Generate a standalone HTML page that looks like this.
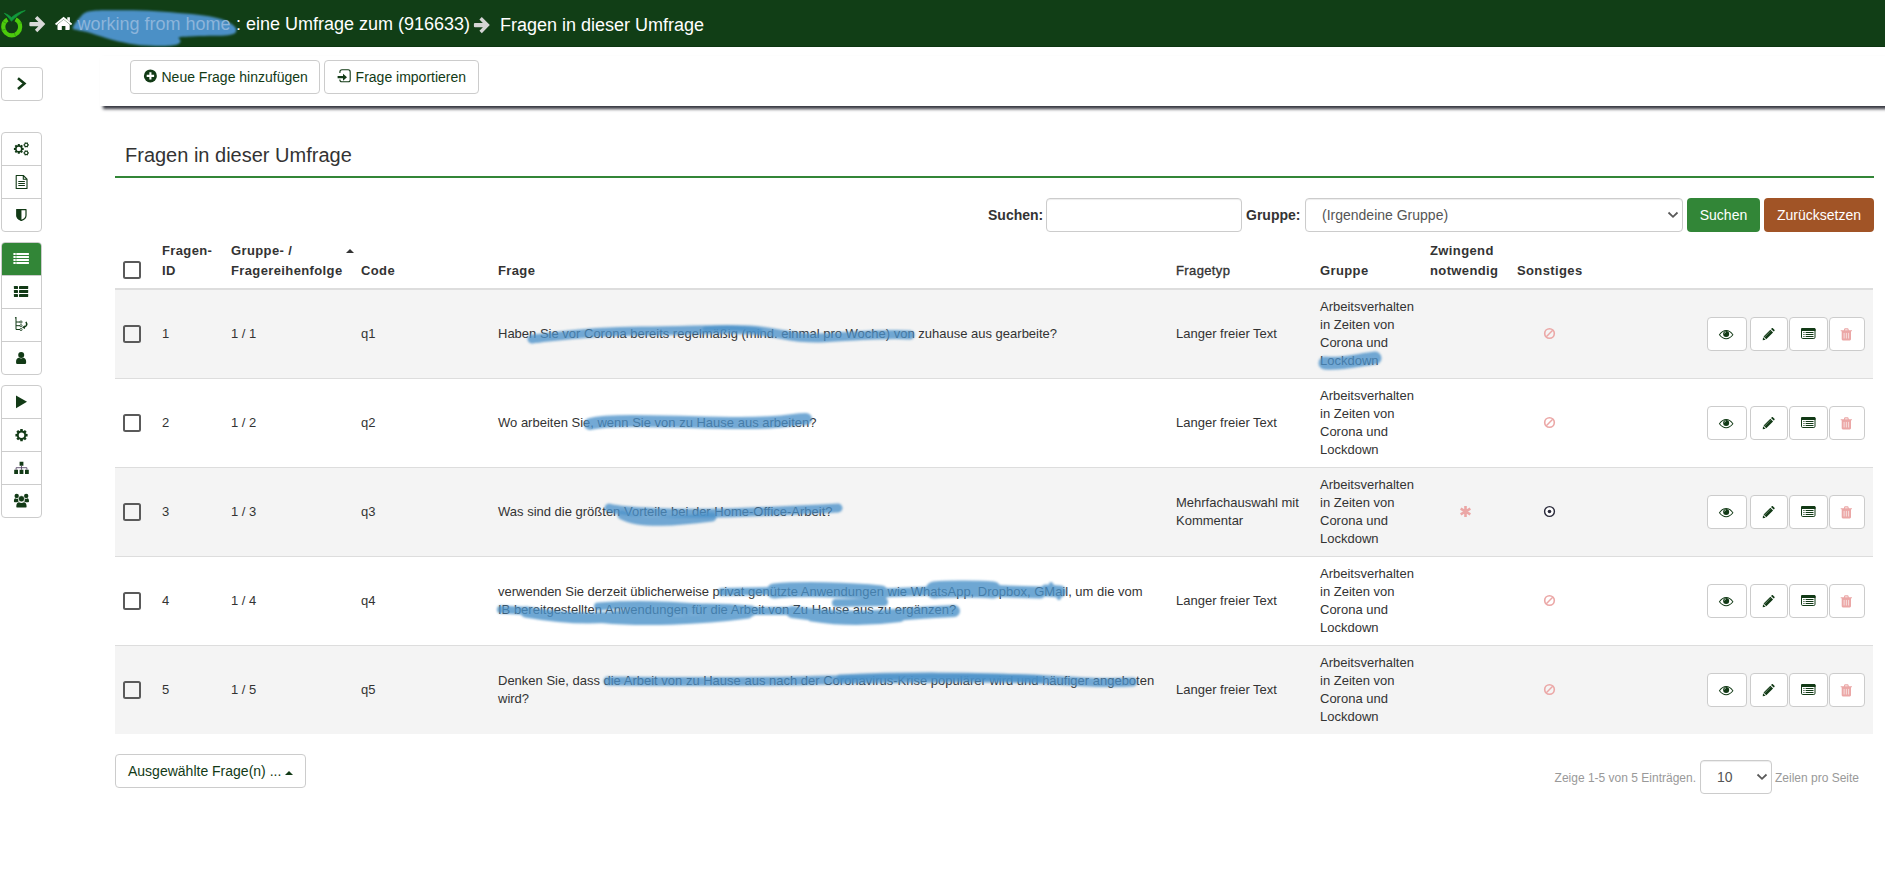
<!DOCTYPE html>
<html lang="de">
<head>
<meta charset="utf-8">
<title>Fragen in dieser Umfrage</title>
<style>
*{box-sizing:border-box;}
html,body{margin:0;padding:0;}
body{width:1885px;height:880px;overflow:hidden;background:#fff;font-family:"Liberation Sans",sans-serif;font-size:14px;color:#333;position:relative;}
svg{display:block;}
.abs{position:absolute;}
#topbar{position:absolute;left:0;top:0;width:1885px;height:47px;background:#113e16;border-bottom:1px solid #0c3511;color:#fff;font-size:18px;}
#topbar .t{position:absolute;top:14px;line-height:21px;white-space:nowrap;}
#menubar{position:absolute;left:100px;top:55.5px;width:1800px;height:50px;background:#fff;box-shadow:3px 3px 3px #35363f;}
.btn{position:absolute;height:34px;border:1px solid #ccc;border-radius:4px;background:#fff;color:#123a16;font-size:14px;line-height:20px;padding:6px 12px;white-space:nowrap;}
.sgroup{position:absolute;left:1px;width:41px;border:1px solid #ccc;border-radius:4px;background:#fff;overflow:hidden;}
.sgroup .sb{height:33px;border-top:1px solid #ccc;}
.sgroup .sb:first-child{border-top:none;height:32px;}
.sgroup .sb.act{background:#328637;}
h3.title{position:absolute;left:115px;top:132px;width:1759px;height:46px;margin:0;font-size:20px;font-weight:normal;line-height:28px;padding:9px 10px 7px 10px;border-bottom:2px solid #328637;color:#333;}
.lbl{position:absolute;font-weight:bold;font-size:14px;line-height:20px;top:205px;color:#333;}
.inp{position:absolute;top:198px;height:34px;border:1px solid #ccc;border-radius:4px;background:#fff;box-shadow:inset 0 1px 1px rgba(0,0,0,.075);}
.sbtn{position:absolute;top:198px;height:34px;border-radius:4px;color:#fff;font-size:14px;line-height:20px;padding:7px 0;text-align:center;}
table#q{position:absolute;left:115px;top:240px;width:1758px;border-collapse:separate;border-spacing:0;table-layout:fixed;font-size:13px;line-height:18px;color:#333;}
#q th{text-align:left;vertical-align:bottom;padding:0 8px 7px 8px;height:50px;line-height:20px;font-weight:bold;border-bottom:2px solid #ddd;letter-spacing:0.38px;}
#q td{padding:8px;height:89px;vertical-align:middle;border-top:1px solid #ddd;}
#q tbody tr:first-child td{border-top:none;height:88px;}
#q tbody tr:nth-child(odd){background:#f4f4f4;}
.cb{display:block;width:18px;height:18px;border:2px solid #5a5a5a;border-radius:2.5px;background:transparent;}
.c{text-align:center;}
.acts{position:relative;height:34px;}
.ab{position:absolute;top:0;height:34px;border:1px solid #ccc;border-radius:4px;background:#fff;}
.foot{position:absolute;font-size:12px;color:#999;line-height:17px;top:770px;white-space:nowrap;}
.caret{position:absolute;width:0;height:0;border-left:4px solid transparent;border-right:4px solid transparent;border-bottom:4px solid #123a16;}
.chev{position:absolute;}
</style>
</head>
<body>

<div id="topbar">
  <svg class="abs" style="left:0;top:0;pointer-events:none" width="260" height="47" viewBox="0 0 260 47"><defs><filter id="bl2" x="-5%" y="-10%" width="110%" height="120%"><feGaussianBlur stdDeviation="0.9"/></filter></defs><path fill="#4b90c6" filter="url(#bl2)" d="M72.8 28.0 C73.0 26.1 76.1 21.3 79.0 18.5 C81.9 15.7 82.3 12.6 90.0 11.2 C97.7 9.8 114.0 10.3 125.0 10.3 C136.0 10.3 146.0 10.7 156.0 11.2 C166.0 11.7 176.2 12.7 185.0 13.5 C193.8 14.3 202.3 15.0 209.0 16.2 C215.7 17.4 220.9 18.9 225.0 20.5 C229.1 22.1 231.6 23.9 233.5 25.5 C235.4 27.1 236.2 28.6 236.3 30.0 C236.4 31.4 235.9 32.9 234.0 33.8 C232.1 34.7 229.2 35.2 225.0 35.5 C220.8 35.8 214.8 35.6 209.0 35.8 C203.2 36.0 195.0 36.3 190.0 36.6 C185.0 36.9 180.6 36.7 179.0 37.5 C177.4 38.3 181.2 40.2 180.5 41.5 C179.8 42.8 179.1 44.2 175.0 45.0 C170.9 45.8 162.7 46.1 156.0 46.0 C149.3 45.9 142.1 45.5 135.0 44.5 C128.0 43.5 119.9 41.7 113.7 40.2 C107.5 38.7 102.5 36.9 98.0 35.5 C93.5 34.1 90.3 32.9 87.0 32.0 C83.7 31.1 80.4 30.9 78.0 30.2 C75.6 29.5 72.6 29.9 72.8 28.0Z"/></svg>
  <span class="t" style="left:77.5px;color:#8db5db">working from home</span>
  <span class="t" style="left:236px">: eine Umfrage zum (916633)</span>
  <span class="t" style="left:500px;top:15px">Fragen in dieser Umfrage</span>
  <svg class="abs" style="left:0;top:0" width="520" height="47" viewBox="0 0 520 47"><circle cx="11.7" cy="26.9" r="8.45" fill="none" stroke="#4ccb0c" stroke-width="4.2" stroke-dasharray="44.6 8.5" stroke-dashoffset="-43.6"/><path stroke="#2b9210" stroke-width=".7" fill="none" d="M19.8 23.3 L22 22.3 M1.6 30.4 L5.9 29.1 M14.4 33 L15.6 36.6 M2.9 21.5 L6.5 23.3"/><path stroke="#119a3c" stroke-width=".7" stroke-linejoin="round" fill="#119a3c" d="M4.3 13.3 C7 14.2 9.6 15.6 11.4 17.6 C15 14.3 20 11.6 25.3 10.5 C20.2 13.3 15.2 17.4 11.4 21.2 C9.4 18.3 7 15.5 4.3 13.3Z"/><path fill="#d9d9d9" d="M30.40 22.00 h8 l-3.5 -3.6 l2.4 -2.4 l8 8.1 l-8 8.1 l-2.4 -2.4 l3.5 -3.6 h-8 a1 1 0 0 1 -1 -1 v-2.2 a1 1 0 0 1 1 -1z"/><path fill="#d4d4d4" d="M474.90 23.00 h8 l-3.5 -3.6 l2.4 -2.4 l8 8.1 l-8 8.1 l-2.4 -2.4 l3.5 -3.6 h-8 a1 1 0 0 1 -1 -1 v-2.2 a1 1 0 0 1 1 -1z"/><path fill="#fff" d="M63.6 19.6 L69.7 24.6 V29.3 C69.7 29.7 69.4 30 69 30 H65.4 V25.9 H61.8 V30 H58.2 C57.8 30 57.5 29.7 57.5 29.3 V24.6Z"/><path fill="none" stroke="#fff" stroke-width="1.9" stroke-linejoin="miter" d="M55.6 24.6 L63.6 18 L71.6 24.6"/><path fill="#fff" d="M67.3 17.3 h2.6 v4.6 l-2.6 -2.2z"/></svg>
</div>

<div id="menubar"></div>
<div class="btn" style="left:130px;top:60px;width:190px;padding-left:30.5px">Neue Frage hinzufügen</div>
<div class="btn" style="left:324px;top:60px;width:155px;padding-left:30.6px">Frage importieren</div>
<svg class="abs" style="left:100px;top:55px" width="400" height="50" viewBox="100 55 400 50"><circle cx="150.4" cy="75.9" r="6.5" fill="#123a16"/><path stroke="#fff" stroke-width="2.1" d="M146.7 75.9 H154.1 M150.4 72.2 V79.6"/><path fill="none" stroke="#123a16" stroke-width="1.1" d="M339.9 73 V71.9 C339.9 70.6 340.9 69.8 342 69.8 H348.2 C349.4 69.8 350.2 70.7 350.2 71.9 V79.7 C350.2 80.9 349.4 81.8 348.2 81.8 H342 C340.9 81.8 339.9 81 339.9 79.7 V79.6"/><path fill="#123a16" d="M337.6 76.1 H343 V73.7 L347 77.2 L343 80.7 V78.3 H337.6Z"/></svg>

<div class="btn" style="left:1px;top:67px;width:42px;padding:0"></div>

<div class="sgroup" style="top:132px;"><div class="sb"></div><div class="sb"></div><div class="sb"></div></div>
<div class="sgroup" style="top:242px;"><div class="sb act"></div><div class="sb"></div><div class="sb"></div><div class="sb"></div></div>
<div class="sgroup" style="top:385px;"><div class="sb"></div><div class="sb"></div><div class="sb"></div><div class="sb"></div></div>
<svg class="abs" style="left:0;top:0" width="46" height="530" viewBox="0 0 46 530"><path fill="#123a16" fill-rule="evenodd" d="M22.44 147.81 L23.70 147.92 L23.70 149.88 L22.44 149.99 L22.14 150.70 L22.96 151.68 L21.58 153.06 L20.60 152.24 L19.89 152.54 L19.78 153.80 L17.82 153.80 L17.71 152.54 L17.00 152.24 L16.02 153.06 L14.64 151.68 L15.46 150.70 L15.16 149.99 L13.90 149.88 L13.90 147.92 L15.16 147.81 L15.46 147.10 L14.64 146.12 L16.02 144.74 L17.00 145.56 L17.71 145.26 L17.82 144.00 L19.78 144.00 L19.89 145.26 L20.60 145.56 L21.58 144.74 L22.96 146.12 L22.14 147.10ZM16.60 148.90 a2.20 2.20 0 1 0 4.40 0 a2.20 2.20 0 1 0 -4.40 0ZM28.10 144.13 L28.90 144.18 L28.90 145.62 L28.10 145.67 L27.82 146.16 L28.18 146.88 L26.92 147.60 L26.48 146.93 L25.92 146.93 L25.48 147.60 L24.22 146.88 L24.58 146.16 L24.30 145.67 L23.50 145.62 L23.50 144.18 L24.30 144.13 L24.58 143.64 L24.22 142.92 L25.48 142.20 L25.92 142.87 L26.48 142.87 L26.92 142.20 L28.18 142.92 L27.82 143.64ZM25.05 144.90 a1.15 1.15 0 1 0 2.30 0 a1.15 1.15 0 1 0 -2.30 0ZM28.10 152.13 L28.90 152.18 L28.90 153.62 L28.10 153.67 L27.82 154.16 L28.18 154.88 L26.92 155.60 L26.48 154.93 L25.92 154.93 L25.48 155.60 L24.22 154.88 L24.58 154.16 L24.30 153.67 L23.50 153.62 L23.50 152.18 L24.30 152.13 L24.58 151.64 L24.22 150.92 L25.48 150.20 L25.92 150.87 L26.48 150.87 L26.92 150.20 L28.18 150.92 L27.82 151.64ZM25.05 152.90 a1.15 1.15 0 1 0 2.30 0 a1.15 1.15 0 1 0 -2.30 0Z"/><path fill="none" stroke="#123a16" stroke-width="1.1" stroke-linejoin="round" d="M16.2 175.5 H23.3 L27 179.2 V188.5 H16.2Z M23.3 175.5 V179.2 H27"/><path stroke="#123a16" stroke-width="1" d="M18.3 181.5H24.9 M18.3 183.5H24.9 M18.3 185.5H24.9"/><path fill="#fff" stroke="#123a16" stroke-width="1.2" stroke-linejoin="round" d="M16.9 209.6 H26 V215.5 C26 218 23.5 219.6 21.45 220.4 C19.4 219.6 16.9 218 16.9 215.5Z"/><path fill="#123a16" d="M16.4 209.1 H21.45 V220.9 C19.2 220 16.4 218.3 16.4 215.5Z"/><rect x="13.4" y="253" width="2.3" height="2" fill="#fff"/><rect x="16.3" y="253" width="12.6" height="2" fill="#fff"/><rect x="13.4" y="256" width="2.3" height="2" fill="#fff"/><rect x="16.3" y="256" width="12.6" height="2" fill="#fff"/><rect x="13.4" y="259" width="2.3" height="2" fill="#fff"/><rect x="16.3" y="259" width="12.6" height="2" fill="#fff"/><rect x="13.4" y="262" width="2.3" height="2" fill="#fff"/><rect x="16.3" y="262" width="12.6" height="2" fill="#fff"/><rect x="13.9" y="286.0" width="4.1" height="3" rx=".4" fill="#123a16"/><rect x="19" y="286.0" width="9.2" height="3" rx=".4" fill="#123a16"/><rect x="13.9" y="290.0" width="4.1" height="3" rx=".4" fill="#123a16"/><rect x="19" y="290.0" width="9.2" height="3" rx=".4" fill="#123a16"/><rect x="13.9" y="294.0" width="4.1" height="3" rx=".4" fill="#123a16"/><rect x="19" y="294.0" width="9.2" height="3" rx=".4" fill="#123a16"/><path fill="none" stroke="#123a16" stroke-width="1" d="M16 318.5 V329.5 H20 M16 322 H20 M16 325.7 H20"/><circle cx="15.8" cy="317.8" r=".9" fill="#123a16"/><circle cx="21" cy="322" r="1.1" fill="none" stroke="#123a16" stroke-width=".8"/><circle cx="21" cy="325.7" r="1.1" fill="none" stroke="#123a16" stroke-width=".8"/><circle cx="21" cy="329.5" r="1.1" fill="none" stroke="#123a16" stroke-width=".8"/><path fill="none" stroke="#123a16" stroke-width="1.5" d="M25.9 321.9 C27.6 324.3 26.4 326.8 24 327.1"/><path fill="#123a16" d="M22 327.4 L24.7 325.2 L25 329Z"/><circle cx="21.2" cy="354.9" r="3" fill="#123a16"/><path fill="#123a16" d="M16.9 363.9 C16.4 363.9 16.1 363.6 16.1 363.1 V361 C16.1 359 17.6 357.9 19 357.7 C20.3 358.7 21.9 358.7 23.2 357.7 C24.6 357.9 26.1 359 26.1 361 V363.1 C26.1 363.6 25.8 363.9 25.3 363.9Z"/><path fill="#123a16" d="M16 395.4 L27 401.85 L16 408.3Z"/><path fill="#123a16" fill-rule="evenodd" d="M26.00 433.85 L27.58 433.99 L27.58 436.41 L26.00 436.55 L25.64 437.43 L26.66 438.64 L24.94 440.36 L23.73 439.34 L22.85 439.70 L22.71 441.28 L20.29 441.28 L20.15 439.70 L19.27 439.34 L18.06 440.36 L16.34 438.64 L17.36 437.43 L17.00 436.55 L15.42 436.41 L15.42 433.99 L17.00 433.85 L17.36 432.97 L16.34 431.76 L18.06 430.04 L19.27 431.06 L20.15 430.70 L20.29 429.12 L22.71 429.12 L22.85 430.70 L23.73 431.06 L24.94 430.04 L26.66 431.76 L25.64 432.97ZM18.75 435.20 a2.75 2.75 0 1 0 5.50 0 a2.75 2.75 0 1 0 -5.50 0Z"/><path fill="#123a16" d="M19.6 461.8h3.8v3.9h-3.8z M14.2 469.8h3.8v4.2h-3.8z M19.6 469.8h3.8v4.2h-3.8z M25 469.8h3.8v4.2h-3.8z"/><path fill="none" stroke="#5a4a6a" stroke-width=".9" d="M21.5 465.6 V469.8 M16.1 469.8 V467.7 H26.9 V469.8"/><circle cx="16.7" cy="495.9" r="2.2" fill="#123a16"/><circle cx="26.2" cy="495.9" r="2.2" fill="#123a16"/><path fill="#123a16" d="M13.9 501.2 C13.9 499.4 14.6 498.4 15.4 498.3 C16.2 498.9 17.2 499 18 498.7 C17.9 499.8 18.2 500.8 18.8 501.5 C18.2 501.6 17.6 501.8 17.2 502.2 H14.8 C14.2 502.2 13.9 501.9 13.9 501.2Z M29 501.2 C29 499.4 28.3 498.4 27.5 498.3 C26.7 498.9 25.7 499 24.9 498.7 C25 499.8 24.7 500.8 24.1 501.5 C24.7 501.6 25.3 501.8 25.7 502.2 H28.1 C28.7 502.2 29 501.9 29 501.2Z"/><circle cx="21.45" cy="498.8" r="3.05" fill="#123a16" stroke="#fff" stroke-width=".5"/><path fill="#123a16" d="M17.2 507.6 C16.5 507.6 16.3 507 16.3 506.2 C16.3 503.6 17.6 502.3 19 502.2 C20.4 503.2 22.5 503.2 23.9 502.2 C25.3 502.3 26.6 503.6 26.6 506.2 C26.6 507 26.4 507.6 25.7 507.6Z"/><path fill="none" stroke="#123a16" stroke-width="2.6" stroke-linejoin="miter" d="M18 78.3 L24.4 83.6 L18 88.9"/></svg>

<h3 class="title">Fragen in dieser Umfrage</h3>

<span class="lbl" style="left:988px">Suchen:</span>
<div class="inp" style="left:1046px;width:196px"></div>
<span class="lbl" style="left:1246px">Gruppe:</span>
<div class="inp" style="left:1305px;width:378px;font-size:14px;line-height:20px;padding:6px 16px;color:#555">(Irgendeine Gruppe)
<svg class="abs" style="right:3.2px;top:11.8px" width="12" height="8" viewBox="0 0 12 8"><path d="M1.5 1.5 L6 5.8 L10.5 1.5" fill="none" stroke="#595959" stroke-width="1.8"/></svg></div>
<div class="sbtn" style="left:1687px;width:73px;background:#328637">Suchen</div>
<div class="sbtn" style="left:1764px;width:110px;background:#a15426">Zurücksetzen</div>

<table id="q">
<colgroup><col style="width:39px"><col style="width:69px"><col style="width:130px"><col style="width:137px"><col style="width:678px"><col style="width:144px"><col style="width:110px"><col style="width:87px"><col style="width:81px"><col></colgroup>
<thead><tr>
<th style="padding-bottom:9px"><span class="cb"></span></th><th>Fragen-<br>ID</th><th style="position:relative">Gruppe- /<br>Fragereihenfolge<span class="caret" style="left:123px;top:9px;border-bottom-color:#333"></span></th><th>Code</th><th>Frage</th><th style="font-weight:normal;-webkit-text-stroke:0.35px #333">Fragetyp</th><th>Gruppe</th><th>Zwingend<br>notwendig</th><th>Sonstiges</th><th></th>
</tr></thead>
<tbody>
<tr><td><span class="cb"></span></td><td>1</td><td>1 / 1</td><td>q1</td><td>Haben Sie vor Corona bereits regelmäßig (mind. einmal pro Woche) von zuhause aus gearbeite?</td><td>Langer freier Text</td><td>Arbeitsverhalten in Zeiten von Corona und Lockdown</td><td class="c"></td><td class="c"><svg style="display:inline-block;vertical-align:middle;position:relative;top:-1px" width="13" height="13" viewBox="0 0 13 13"><circle cx="6.5" cy="6.5" r="4.8" fill="none" stroke="#eba7a6" stroke-width="1.6"/><path stroke="#eba7a6" stroke-width="1.5" d="M3.3 9.7 L9.7 3.3"/></svg></td><td><div class="acts"><span class="ab" style="left:109.25px;width:39.5px"><svg class="abs" style="left:10px;top:10.8px" width="16.5" height="11" viewBox="0 0 18 12"><path fill="#fff" stroke="#123a16" stroke-width="1.1" d="M1.6 6.3 C4 2.6 6.8 1.6 8.9 1.6 C11 1.6 13.8 2.6 16.2 6.3 C13.8 9.6 11 10.6 8.9 10.6 C6.8 10.6 4 9.6 1.6 6.3Z"/><circle cx="8.9" cy="5.4" r="3.3" fill="#123a16"/><path d="M7.1 4.9 A1.9 1.9 0 0 1 8.6 3.3" stroke="#fff" stroke-width=".7" fill="none"/></svg></span><span class="ab" style="left:152.25px;width:37.25px"><svg class="abs" style="left:10.9px;top:9.9px" width="13" height="13" viewBox="0 0 14 14"><path fill="#123a16" d="M9.7 1.1 L10.6 0.3 C10.9 0 11.4 0 11.7 0.3 L13.4 2 C13.7 2.3 13.7 2.8 13.4 3.1 L12.6 3.9Z M9 1.9 L11.9 4.8 L4.6 12.1 L1.7 9.2Z M1.1 9.9 L3.9 12.7 L0.8 13.1Z"/><path stroke="#fff" stroke-width=".6" d="M3.2 9.5 L9.3 3.4" stroke-dasharray="1 .7"/></svg></span><span class="ab" style="left:190.5px;width:39px"><svg class="abs" style="left:11.5px;top:10px" width="15" height="12" viewBox="0 0 15 12"><rect x=".5" y=".5" width="13.5" height="10" rx="1.2" fill="#fff" stroke="#123a16" stroke-width="1"/><path fill="#123a16" d="M0 3V1.2Q0 0 1.2 0H13.3Q14.5 0 14.5 1.2V3Z"/><path stroke="#123a16" stroke-width="1" d="M2.4 4.5h1.1 M4.6 4.5h7.9 M2.4 6.5h1.1 M4.6 6.5h7.9 M2.4 8.5h1.1 M4.6 8.5h7.9"/></svg></span><span class="ab" style="left:230.5px;width:36.25px"><svg class="abs" style="left:10.8px;top:9.6px" width="13" height="13" viewBox="0 0 13 13"><path fill="#eba7a6" d="M4.1 1.3 C4.2 .6 4.6 .3 5.1 .3 H7.6 C8.1 .3 8.5 .6 8.6 1.3 L8.8 2.2 H11.6 C11.9 2.2 12 2.4 12 2.6 V3 C12 3.2 11.9 3.3 11.6 3.3 H11 V11 C11 11.8 10.5 12.4 9.8 12.4 H2.9 C2.2 12.4 1.7 11.8 1.7 11 V3.3 H1.1 C.8 3.3 .7 3.2 .7 3 V2.6 C.7 2.4 .8 2.2 1.1 2.2 H3.9Z M5 2.2 H7.7 L7.5 1.4 H5.2Z"/><path stroke="#f7dedd" stroke-width="1" d="M4.1 4.9V10.5 M6.35 4.9V10.5 M8.6 4.9V10.5"/></svg></span></div></td></tr>
<tr><td><span class="cb"></span></td><td>2</td><td>1 / 2</td><td>q2</td><td>Wo arbeiten Sie, wenn Sie von zu Hause aus arbeiten?</td><td>Langer freier Text</td><td>Arbeitsverhalten in Zeiten von Corona und Lockdown</td><td class="c"></td><td class="c"><svg style="display:inline-block;vertical-align:middle;position:relative;top:-1px" width="13" height="13" viewBox="0 0 13 13"><circle cx="6.5" cy="6.5" r="4.8" fill="none" stroke="#eba7a6" stroke-width="1.6"/><path stroke="#eba7a6" stroke-width="1.5" d="M3.3 9.7 L9.7 3.3"/></svg></td><td><div class="acts"><span class="ab" style="left:109.25px;width:39.5px"><svg class="abs" style="left:10px;top:10.8px" width="16.5" height="11" viewBox="0 0 18 12"><path fill="#fff" stroke="#123a16" stroke-width="1.1" d="M1.6 6.3 C4 2.6 6.8 1.6 8.9 1.6 C11 1.6 13.8 2.6 16.2 6.3 C13.8 9.6 11 10.6 8.9 10.6 C6.8 10.6 4 9.6 1.6 6.3Z"/><circle cx="8.9" cy="5.4" r="3.3" fill="#123a16"/><path d="M7.1 4.9 A1.9 1.9 0 0 1 8.6 3.3" stroke="#fff" stroke-width=".7" fill="none"/></svg></span><span class="ab" style="left:152.25px;width:37.25px"><svg class="abs" style="left:10.9px;top:9.9px" width="13" height="13" viewBox="0 0 14 14"><path fill="#123a16" d="M9.7 1.1 L10.6 0.3 C10.9 0 11.4 0 11.7 0.3 L13.4 2 C13.7 2.3 13.7 2.8 13.4 3.1 L12.6 3.9Z M9 1.9 L11.9 4.8 L4.6 12.1 L1.7 9.2Z M1.1 9.9 L3.9 12.7 L0.8 13.1Z"/><path stroke="#fff" stroke-width=".6" d="M3.2 9.5 L9.3 3.4" stroke-dasharray="1 .7"/></svg></span><span class="ab" style="left:190.5px;width:39px"><svg class="abs" style="left:11.5px;top:10px" width="15" height="12" viewBox="0 0 15 12"><rect x=".5" y=".5" width="13.5" height="10" rx="1.2" fill="#fff" stroke="#123a16" stroke-width="1"/><path fill="#123a16" d="M0 3V1.2Q0 0 1.2 0H13.3Q14.5 0 14.5 1.2V3Z"/><path stroke="#123a16" stroke-width="1" d="M2.4 4.5h1.1 M4.6 4.5h7.9 M2.4 6.5h1.1 M4.6 6.5h7.9 M2.4 8.5h1.1 M4.6 8.5h7.9"/></svg></span><span class="ab" style="left:230.5px;width:36.25px"><svg class="abs" style="left:10.8px;top:9.6px" width="13" height="13" viewBox="0 0 13 13"><path fill="#eba7a6" d="M4.1 1.3 C4.2 .6 4.6 .3 5.1 .3 H7.6 C8.1 .3 8.5 .6 8.6 1.3 L8.8 2.2 H11.6 C11.9 2.2 12 2.4 12 2.6 V3 C12 3.2 11.9 3.3 11.6 3.3 H11 V11 C11 11.8 10.5 12.4 9.8 12.4 H2.9 C2.2 12.4 1.7 11.8 1.7 11 V3.3 H1.1 C.8 3.3 .7 3.2 .7 3 V2.6 C.7 2.4 .8 2.2 1.1 2.2 H3.9Z M5 2.2 H7.7 L7.5 1.4 H5.2Z"/><path stroke="#f7dedd" stroke-width="1" d="M4.1 4.9V10.5 M6.35 4.9V10.5 M8.6 4.9V10.5"/></svg></span></div></td></tr>
<tr><td><span class="cb"></span></td><td>3</td><td>1 / 3</td><td>q3</td><td>Was sind die größten Vorteile bei der Home-Office-Arbeit?</td><td>Mehrfachauswahl mit Kommentar</td><td>Arbeitsverhalten in Zeiten von Corona und Lockdown</td><td class="c"><svg style="display:inline-block;vertical-align:middle;position:relative;top:-1px" width="13" height="13" viewBox="0 0 13 13"><path stroke="#eba7a6" stroke-width="2.6" d="M6.5 .9V12.1 M1.65 3.7 L11.35 9.3 M1.65 9.3 L11.35 3.7"/></svg></td><td class="c"><svg style="display:inline-block;vertical-align:middle;position:relative;top:-1px" width="13" height="13" viewBox="0 0 13 13"><circle cx="6.5" cy="6.5" r="4.9" fill="#fff" stroke="#2a2a3a" stroke-width="1.4"/><circle cx="6.5" cy="6.5" r="1.8" fill="#2a2a3a"/></svg></td><td><div class="acts"><span class="ab" style="left:109.25px;width:39.5px"><svg class="abs" style="left:10px;top:10.8px" width="16.5" height="11" viewBox="0 0 18 12"><path fill="#fff" stroke="#123a16" stroke-width="1.1" d="M1.6 6.3 C4 2.6 6.8 1.6 8.9 1.6 C11 1.6 13.8 2.6 16.2 6.3 C13.8 9.6 11 10.6 8.9 10.6 C6.8 10.6 4 9.6 1.6 6.3Z"/><circle cx="8.9" cy="5.4" r="3.3" fill="#123a16"/><path d="M7.1 4.9 A1.9 1.9 0 0 1 8.6 3.3" stroke="#fff" stroke-width=".7" fill="none"/></svg></span><span class="ab" style="left:152.25px;width:37.25px"><svg class="abs" style="left:10.9px;top:9.9px" width="13" height="13" viewBox="0 0 14 14"><path fill="#123a16" d="M9.7 1.1 L10.6 0.3 C10.9 0 11.4 0 11.7 0.3 L13.4 2 C13.7 2.3 13.7 2.8 13.4 3.1 L12.6 3.9Z M9 1.9 L11.9 4.8 L4.6 12.1 L1.7 9.2Z M1.1 9.9 L3.9 12.7 L0.8 13.1Z"/><path stroke="#fff" stroke-width=".6" d="M3.2 9.5 L9.3 3.4" stroke-dasharray="1 .7"/></svg></span><span class="ab" style="left:190.5px;width:39px"><svg class="abs" style="left:11.5px;top:10px" width="15" height="12" viewBox="0 0 15 12"><rect x=".5" y=".5" width="13.5" height="10" rx="1.2" fill="#fff" stroke="#123a16" stroke-width="1"/><path fill="#123a16" d="M0 3V1.2Q0 0 1.2 0H13.3Q14.5 0 14.5 1.2V3Z"/><path stroke="#123a16" stroke-width="1" d="M2.4 4.5h1.1 M4.6 4.5h7.9 M2.4 6.5h1.1 M4.6 6.5h7.9 M2.4 8.5h1.1 M4.6 8.5h7.9"/></svg></span><span class="ab" style="left:230.5px;width:36.25px"><svg class="abs" style="left:10.8px;top:9.6px" width="13" height="13" viewBox="0 0 13 13"><path fill="#eba7a6" d="M4.1 1.3 C4.2 .6 4.6 .3 5.1 .3 H7.6 C8.1 .3 8.5 .6 8.6 1.3 L8.8 2.2 H11.6 C11.9 2.2 12 2.4 12 2.6 V3 C12 3.2 11.9 3.3 11.6 3.3 H11 V11 C11 11.8 10.5 12.4 9.8 12.4 H2.9 C2.2 12.4 1.7 11.8 1.7 11 V3.3 H1.1 C.8 3.3 .7 3.2 .7 3 V2.6 C.7 2.4 .8 2.2 1.1 2.2 H3.9Z M5 2.2 H7.7 L7.5 1.4 H5.2Z"/><path stroke="#f7dedd" stroke-width="1" d="M4.1 4.9V10.5 M6.35 4.9V10.5 M8.6 4.9V10.5"/></svg></span></div></td></tr>
<tr><td><span class="cb"></span></td><td>4</td><td>1 / 4</td><td>q4</td><td>verwenden Sie derzeit üblicherweise privat genützte Anwendungen wie WhatsApp, Dropbox, GMail, um die vom<br>IB bereitgestellten Anwendungen für die Arbeit von Zu Hause aus zu ergänzen?</td><td>Langer freier Text</td><td>Arbeitsverhalten in Zeiten von Corona und Lockdown</td><td class="c"></td><td class="c"><svg style="display:inline-block;vertical-align:middle;position:relative;top:-1px" width="13" height="13" viewBox="0 0 13 13"><circle cx="6.5" cy="6.5" r="4.8" fill="none" stroke="#eba7a6" stroke-width="1.6"/><path stroke="#eba7a6" stroke-width="1.5" d="M3.3 9.7 L9.7 3.3"/></svg></td><td><div class="acts"><span class="ab" style="left:109.25px;width:39.5px"><svg class="abs" style="left:10px;top:10.8px" width="16.5" height="11" viewBox="0 0 18 12"><path fill="#fff" stroke="#123a16" stroke-width="1.1" d="M1.6 6.3 C4 2.6 6.8 1.6 8.9 1.6 C11 1.6 13.8 2.6 16.2 6.3 C13.8 9.6 11 10.6 8.9 10.6 C6.8 10.6 4 9.6 1.6 6.3Z"/><circle cx="8.9" cy="5.4" r="3.3" fill="#123a16"/><path d="M7.1 4.9 A1.9 1.9 0 0 1 8.6 3.3" stroke="#fff" stroke-width=".7" fill="none"/></svg></span><span class="ab" style="left:152.25px;width:37.25px"><svg class="abs" style="left:10.9px;top:9.9px" width="13" height="13" viewBox="0 0 14 14"><path fill="#123a16" d="M9.7 1.1 L10.6 0.3 C10.9 0 11.4 0 11.7 0.3 L13.4 2 C13.7 2.3 13.7 2.8 13.4 3.1 L12.6 3.9Z M9 1.9 L11.9 4.8 L4.6 12.1 L1.7 9.2Z M1.1 9.9 L3.9 12.7 L0.8 13.1Z"/><path stroke="#fff" stroke-width=".6" d="M3.2 9.5 L9.3 3.4" stroke-dasharray="1 .7"/></svg></span><span class="ab" style="left:190.5px;width:39px"><svg class="abs" style="left:11.5px;top:10px" width="15" height="12" viewBox="0 0 15 12"><rect x=".5" y=".5" width="13.5" height="10" rx="1.2" fill="#fff" stroke="#123a16" stroke-width="1"/><path fill="#123a16" d="M0 3V1.2Q0 0 1.2 0H13.3Q14.5 0 14.5 1.2V3Z"/><path stroke="#123a16" stroke-width="1" d="M2.4 4.5h1.1 M4.6 4.5h7.9 M2.4 6.5h1.1 M4.6 6.5h7.9 M2.4 8.5h1.1 M4.6 8.5h7.9"/></svg></span><span class="ab" style="left:230.5px;width:36.25px"><svg class="abs" style="left:10.8px;top:9.6px" width="13" height="13" viewBox="0 0 13 13"><path fill="#eba7a6" d="M4.1 1.3 C4.2 .6 4.6 .3 5.1 .3 H7.6 C8.1 .3 8.5 .6 8.6 1.3 L8.8 2.2 H11.6 C11.9 2.2 12 2.4 12 2.6 V3 C12 3.2 11.9 3.3 11.6 3.3 H11 V11 C11 11.8 10.5 12.4 9.8 12.4 H2.9 C2.2 12.4 1.7 11.8 1.7 11 V3.3 H1.1 C.8 3.3 .7 3.2 .7 3 V2.6 C.7 2.4 .8 2.2 1.1 2.2 H3.9Z M5 2.2 H7.7 L7.5 1.4 H5.2Z"/><path stroke="#f7dedd" stroke-width="1" d="M4.1 4.9V10.5 M6.35 4.9V10.5 M8.6 4.9V10.5"/></svg></span></div></td></tr>
<tr><td><span class="cb"></span></td><td>5</td><td>1 / 5</td><td>q5</td><td>Denken Sie, dass die Arbeit von zu Hause aus nach der Coronavirus-Krise populärer wird und häufiger angeboten wird?</td><td>Langer freier Text</td><td>Arbeitsverhalten in Zeiten von Corona und Lockdown</td><td class="c"></td><td class="c"><svg style="display:inline-block;vertical-align:middle;position:relative;top:-1px" width="13" height="13" viewBox="0 0 13 13"><circle cx="6.5" cy="6.5" r="4.8" fill="none" stroke="#eba7a6" stroke-width="1.6"/><path stroke="#eba7a6" stroke-width="1.5" d="M3.3 9.7 L9.7 3.3"/></svg></td><td><div class="acts"><span class="ab" style="left:109.25px;width:39.5px"><svg class="abs" style="left:10px;top:10.8px" width="16.5" height="11" viewBox="0 0 18 12"><path fill="#fff" stroke="#123a16" stroke-width="1.1" d="M1.6 6.3 C4 2.6 6.8 1.6 8.9 1.6 C11 1.6 13.8 2.6 16.2 6.3 C13.8 9.6 11 10.6 8.9 10.6 C6.8 10.6 4 9.6 1.6 6.3Z"/><circle cx="8.9" cy="5.4" r="3.3" fill="#123a16"/><path d="M7.1 4.9 A1.9 1.9 0 0 1 8.6 3.3" stroke="#fff" stroke-width=".7" fill="none"/></svg></span><span class="ab" style="left:152.25px;width:37.25px"><svg class="abs" style="left:10.9px;top:9.9px" width="13" height="13" viewBox="0 0 14 14"><path fill="#123a16" d="M9.7 1.1 L10.6 0.3 C10.9 0 11.4 0 11.7 0.3 L13.4 2 C13.7 2.3 13.7 2.8 13.4 3.1 L12.6 3.9Z M9 1.9 L11.9 4.8 L4.6 12.1 L1.7 9.2Z M1.1 9.9 L3.9 12.7 L0.8 13.1Z"/><path stroke="#fff" stroke-width=".6" d="M3.2 9.5 L9.3 3.4" stroke-dasharray="1 .7"/></svg></span><span class="ab" style="left:190.5px;width:39px"><svg class="abs" style="left:11.5px;top:10px" width="15" height="12" viewBox="0 0 15 12"><rect x=".5" y=".5" width="13.5" height="10" rx="1.2" fill="#fff" stroke="#123a16" stroke-width="1"/><path fill="#123a16" d="M0 3V1.2Q0 0 1.2 0H13.3Q14.5 0 14.5 1.2V3Z"/><path stroke="#123a16" stroke-width="1" d="M2.4 4.5h1.1 M4.6 4.5h7.9 M2.4 6.5h1.1 M4.6 6.5h7.9 M2.4 8.5h1.1 M4.6 8.5h7.9"/></svg></span><span class="ab" style="left:230.5px;width:36.25px"><svg class="abs" style="left:10.8px;top:9.6px" width="13" height="13" viewBox="0 0 13 13"><path fill="#eba7a6" d="M4.1 1.3 C4.2 .6 4.6 .3 5.1 .3 H7.6 C8.1 .3 8.5 .6 8.6 1.3 L8.8 2.2 H11.6 C11.9 2.2 12 2.4 12 2.6 V3 C12 3.2 11.9 3.3 11.6 3.3 H11 V11 C11 11.8 10.5 12.4 9.8 12.4 H2.9 C2.2 12.4 1.7 11.8 1.7 11 V3.3 H1.1 C.8 3.3 .7 3.2 .7 3 V2.6 C.7 2.4 .8 2.2 1.1 2.2 H3.9Z M5 2.2 H7.7 L7.5 1.4 H5.2Z"/><path stroke="#f7dedd" stroke-width="1" d="M4.1 4.9V10.5 M6.35 4.9V10.5 M8.6 4.9V10.5"/></svg></span></div></td></tr>
</tbody>
</table>

<div class="btn" style="left:115px;top:754px;width:191px;">Ausgewählte Frage(n) ...<span class="caret" style="left:168.8px;top:15.5px"></span></div>

<span class="foot" style="left:1554.6px">Zeige 1-5 von 5 Einträgen.</span>
<div class="inp" style="left:1700px;top:760px;width:72px;font-size:14px;line-height:20px;padding:6px 16px;color:#555">10
<svg class="abs" style="right:3.2px;top:11.8px" width="12" height="8" viewBox="0 0 12 8"><path d="M1.5 1.5 L6 5.8 L10.5 1.5" fill="none" stroke="#595959" stroke-width="1.8"/></svg></div>
<span class="foot" style="left:1775px">Zeilen pro Seite</span>

<svg class="abs" style="left:0;top:0;pointer-events:none" width="1885" height="880" viewBox="0 0 1885 880">
<defs><filter id="bl" x="-5%" y="-50%" width="110%" height="200%"><feGaussianBlur stdDeviation="0.8"/></filter></defs>
<g fill="none" stroke="#4c91c9" stroke-linecap="round" stroke-linejoin="round" filter="url(#bl)">

<g stroke-opacity=".78">
<path stroke-width="9" d="M532 339 C560 336 590 331 640 331 S720 328 750 330 S790 339 820 338 S880 333 910 335"/>
<path stroke-width="5" d="M705 329 C725 327 745 328 760 331"/>
<path stroke-width="13" d="M1325 363 C1340 365 1358 360 1375 358"/>
<path stroke-width="12" d="M590 424 C615 418 690 423 740 423 S790 419 806 419"/>
<path stroke-width="9" d="M609 508 C625 512 680 514 720 513 S800 510 838 508"/>
<path stroke-width="9" d="M622 515 C640 525 680 521 712 517"/>
<g opacity=".8" stroke-opacity="1">
<path stroke-width="8" d="M722 592 L772 591"/>
<path stroke-width="15" d="M774 591 C800 588.5 850 589.5 881 593"/>
<path stroke-width="9" d="M880 593 L932 591"/>
<path stroke-width="17" d="M934 590 C950 588.5 980 589 993 590"/>
<path stroke-width="12" d="M994 591 L1040 592.5"/>
<path stroke-width="12" d="M1046 590.5 L1060 591.5"/>
<path stroke-width="4" d="M1051 584 L1059 598"/>
<path stroke-width="8" d="M501 609.5 L528 611"/>
<path stroke-width="11" d="M526 612 C560 618 590 620 620 616 S690 606 751 611"/>
<path stroke-width="8" d="M598 606.5 C640 603.5 680 606 702 608"/>
<path stroke-width="9" d="M602 618.5 C640 622.5 700 620.5 748 614"/>
<path stroke-width="8" d="M751 611 L792 611"/>
<path stroke-width="12" d="M792 612 C820 616 850 618 880 616 S930 612 954 611"/>
<path stroke-width="8" d="M836 603 L884 602"/>
<path stroke-width="8" d="M812 617.5 C840 622 870 622 900 618"/>
</g>
<path stroke-width="9" d="M608 681 C700 682 760 682 830 680 S1000 677 1050 680 S1110 683 1133 682"/>
<path stroke-width="7" d="M840 678 C900 675 980 675 1040 679"/>
</g>
</g>
</svg>

</body>
</html>
